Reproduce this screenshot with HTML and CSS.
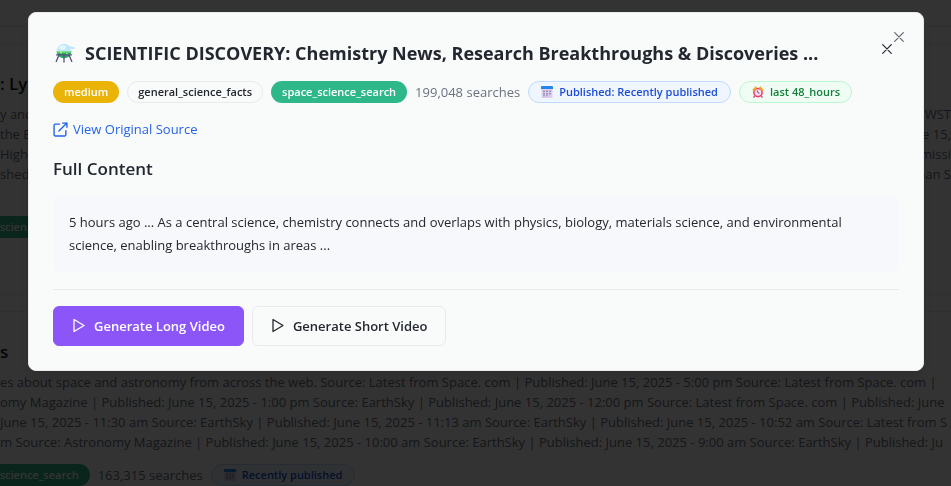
FILE: index.html
```html
<!DOCTYPE html>
<html lang="en">
<head>
<meta charset="utf-8">
<meta name="viewport" content="width=device-width, initial-scale=1">
<title>Scientific Discovery</title>
<link rel="stylesheet" href="styles.css">
</head>
<body>
<svg class="sprite" aria-hidden="true">
  <symbol id="calendar" viewBox="0 0 12 12">
    <rect x="0.5" y="1" width="11" height="11" rx="1" fill="#dccdec"/>
    <path d="M1 0h10a1 1 0 0 1 1 1v2H0V1a1 1 0 0 1 1-1z" fill="#2585ea"/>
    <path d="M2 4.5h2v1.5H2zM5 4.5h2v1.5H5zM8 4.5h2v1.5H8zM2 7h2v1.5H2zM5 7h2v1.5H5zM8 7h2v1.5H8zM2 9.3h2v1H2zM5 9.3h2v1H5z" fill="#9d8fba"/>
  </symbol>
  <symbol id="play" viewBox="0 0 14 16">
    <path d="M2 1.5v12l10-6z" fill="none" stroke="currentColor" stroke-width="1.3" stroke-linejoin="round"/>
  </symbol>
  <symbol id="cross" viewBox="0 0 10 10">
    <path d="M.7.7l8.6 8.6M9.3.7L.7 9.3" fill="none" stroke="currentColor" stroke-width="1.2" stroke-linecap="round"/>
  </symbol>
</svg>

<div class="page" aria-hidden="true">
  <div class="topbar"></div>
  <section class="card card-first">
    <h2 class="card-title">: Lyc</h2>
    <div class="pair"><span>y and</span><span>WST</span></div>
    <div class="pair"><span>the Ea</span><span>e 15,</span></div>
    <div class="pair"><span>High</span><span>missi</span></div>
    <div class="pair"><span>shed</span><span>man S</span></div>
    <div class="card-tags"><span class="tag tag-green tag-cut">_scien</span></div>
  </section>
  <section class="card card-second">
    <h2 class="card-title">s</h2>
    <p class="line">es about space and astronomy from across the web. Source: Latest from Space. com | Published: June 15, 2025 - 5:00 pm Source: Latest from Space. com |</p>
    <p class="line">omy Magazine | Published: June 15, 2025 - 1:00 pm Source: EarthSky | Published: June 15, 2025 - 12:00 pm Source: Latest from Space. com | Published: June</p>
    <p class="line">June 15, 2025 - 11:30 am Source: EarthSky | Published: June 15, 2025 - 11:13 am Source: EarthSky | Published: June 15, 2025 - 10:52 am Source: Latest from S</p>
    <p class="line">m Source: Astronomy Magazine | Published: June 15, 2025 - 10:00 am Source: EarthSky | Published: June 15, 2025 - 9:00 am Source: EarthSky | Published: Ju</p>
    <div class="card-tags">
      <span class="tag tag-green tag-cut">_science_search</span>
      <span class="count">163,315 searches</span>
      <span class="tag tag-blue"><svg class="mini"><use href="#calendar"/></svg>Recently published</span>
    </div>
  </section>
</div>

<div class="overlay">
  <div class="dialog" role="dialog" aria-modal="true" aria-labelledby="title">
    <button class="close close-corner" type="button" aria-label="Close"><svg><use href="#cross"/></svg></button>
    <header class="head">
      <svg class="flask" viewBox="0 0 20 20" aria-hidden="true">
        <path d="M11 2.5l8 1.7c1.2.4.9 2-.3 1.8L13 5z" fill="#b9e4fa"/>
        <circle cx="9" cy="8" r="7.3" fill="#bfe6fa"/>
        <ellipse cx="7.5" cy="4.5" rx="3.5" ry="2.3" fill="#e2f6ff"/>
        <path d="M1.7 8.3h14.6c0 4-3.2 7-7.3 7s-7.3-3-7.3-7z" fill="#27ad68"/>
        <path d="M1.7 8h14.6v1.6H1.7z" fill="#7be08e"/>
        <circle cx="6" cy="9.5" r="1" fill="#d5f26a"/>
        <circle cx="12" cy="11" r=".9" fill="#b5ef7b"/>
        <path d="M1.5 11.8h15M4 12l-2.8 6.5M14 12l2.8 6.5M9 13v6" fill="none" stroke="#5e4a7c" stroke-width="1.3" stroke-linecap="round"/>
      </svg>
      <h1 id="title">SCIENTIFIC DISCOVERY: Chemistry News, Research Breakthroughs &amp; Discoveries ...</h1>
      <button class="close" type="button" aria-label="Dismiss"><svg><use href="#cross"/></svg></button>
    </header>
    <div class="tags">
      <span class="tag tag-amber">medium</span>
      <span class="tag tag-plain">general_science_facts</span>
      <span class="tag tag-green">space_science_search</span>
      <span class="count">199,048 searches</span>
      <span class="tag tag-blue"><svg class="mini"><use href="#calendar"/></svg>Published: Recently published</span>
      <span class="tag tag-mint"><svg class="mini" viewBox="0 0 12 12">
        <circle cx="6" cy="6.6" r="4.1" fill="#f9dfeb" stroke="#ec3f72" stroke-width="1.6"/>
        <path d="M.2 3.9L3.6.2l1.6 1.7L1.8 5.2zM11.8 3.9L8.4.2 6.8 1.9l3.4 3.3z" fill="#f4a52c"/>
        <path d="M2.6 10l-1 1.6M9.4 10l1 1.6" stroke="#c33468" stroke-width="1.2"/>
        <path d="M5.2 4.5L6 6.7l1.4.6" fill="none" stroke="#6b4776"/>
      </svg>last 48_hours</span>
    </div>
    <a class="source" href="#source">
      <svg viewBox="0 0 14 14" aria-hidden="true"><path d="M6 2H2a1 1 0 0 0-1 1v9a1 1 0 0 0 1 1h9a1 1 0 0 0 1-1V8M9 1h4v4M13 1L5.5 8.5" fill="none" stroke="currentColor" stroke-width="1.3" stroke-linecap="round" stroke-linejoin="round"/></svg>
      View Original Source</a>
    <h2 class="subhead">Full Content</h2>
    <p class="content">5 hours ago ... As a central science, chemistry connects and overlaps with physics, biology, materials science, and environmental science, enabling breakthroughs in areas ...</p>
    <footer class="actions">
      <button class="btn btn-primary" type="button"><svg><use href="#play"/></svg>Generate Long Video</button>
      <button class="btn" type="button"><svg><use href="#play"/></svg>Generate Short Video</button>
    </footer>
  </div>
</div>
</body>
</html>
```
FILE: styles.css
```css
* { box-sizing: border-box; }
body {
  margin: 0;
  height: 100vh;
  overflow: hidden;
  background: #fff;
  color: #23272f;
  font: 13px/20px "Segoe UI", "Open Sans", "Noto Sans", sans-serif;
}
h1, h2, p { margin: 0; }
button { font: inherit; color: inherit; cursor: pointer; }
.sprite { display: none; }

.page { height: 100vh; overflow: hidden; }
.topbar { height: 27px; border-bottom: 1px solid #e5e7eb; }
.card {
  border: solid #e8eaed;
  border-width: 1px 0;
  margin-top: 16px;
  color: #6b7280;
}
.card-first { padding: 26px 0 56px; }
.card-second { padding: 26px 0; }
.card-title {
  color: #111827;
  font-size: 17px;
  line-height: 28px;
  font-weight: 600;
  margin-bottom: 6px;
}
.pair { display: flex; justify-content: space-between; white-space: nowrap; }
.line { white-space: nowrap; overflow: hidden; }
.card-tags { display: flex; align-items: center; gap: 8px; margin: 12px 0 0 -5px; }
.card-first .card-tags { margin-top: 32px; }

.tag {
  display: inline-flex;
  align-items: center;
  height: 22px;
  padding: 0 10px;
  border: 1px solid transparent;
  border-radius: 11px;
  font-size: 11px;
  line-height: 20px;
  font-weight: 600;
  white-space: nowrap;
}
.tag-cut { padding-left: 0; border-left: 0; border-radius: 0 11px 11px 0; }
.tag-amber { background: #eab308; color: #fff; }
.tag-plain { border-color: #e8eaec; }
.tag-green { background: #2eb88a; color: #fff; }
.tag-blue { background: #eff6ff; border-color: #bfdbfe; color: #1d4ed8; padding: 0 12px; }
.tag-mint { background: #f0fdf4; border-color: #bbf7d0; color: #15803d; padding: 0 11px 0 12px; }
.mini { width: 12px; height: 12px; margin-right: 6px; }
.count { color: #6b7280; white-space: nowrap; }

.overlay {
  position: fixed;
  inset: 0;
  padding: 12px 27px 12px 28px;
  background: rgba(0, 0, 0, .8);
}
.dialog {
  position: relative;
  max-width: 896px;
  margin: 0 auto;
  padding: 24px;
  border: 1px solid #e8eaec;
  border-radius: 8px;
  background: #f9fbfa;
  box-shadow: 0 10px 15px rgba(0, 0, 0, .1);
}
.close {
  display: flex;
  padding: 7px;
  border: 0;
  background: none;
}
.close svg { width: 10px; height: 10px; }
.close-corner { position: absolute; top: 12px; right: 12px; z-index: 1; opacity: .7; }
.head { display: flex; align-items: center; height: 32px; gap: 8px; }
.head .close { margin: -8px 0 0 auto; }
.flask { flex: none; width: 24px; height: 20px; }
h1 { font-size: 18px; line-height: 32px; font-weight: 700; white-space: nowrap; }
.tags { display: flex; align-items: center; gap: 8px; margin-top: 12px; height: 22px; }
.source {
  display: flex;
  align-items: center;
  gap: 5px;
  width: max-content;
  margin-top: 16px;
  color: #2563eb;
  text-decoration: none;
}
.source svg { width: 15px; height: 15px; }
.subhead { margin-top: 16px; font-size: 17px; line-height: 28px; font-weight: 600; }
.content {
  margin-top: 12px;
  padding: 16px;
  border-radius: 8px;
  background: #f7f8fb;
  line-height: 23px;
}
.actions {
  display: flex;
  gap: 8px;
  margin-top: 16px;
  padding-top: 16px;
  border-top: 1px solid #e8eaec;
}
.btn {
  display: inline-flex;
  align-items: center;
  gap: 8px;
  height: 40px;
  padding: 0 18px;
  border: 1px solid #e8eaec;
  border-radius: 6px;
  background: #f9fbfa;
  font-weight: 600;
}
.btn svg { width: 14px; height: 16px; }
.btn-primary { border-color: #8b55f7; background: #8b55f7; color: #fff; }
```
